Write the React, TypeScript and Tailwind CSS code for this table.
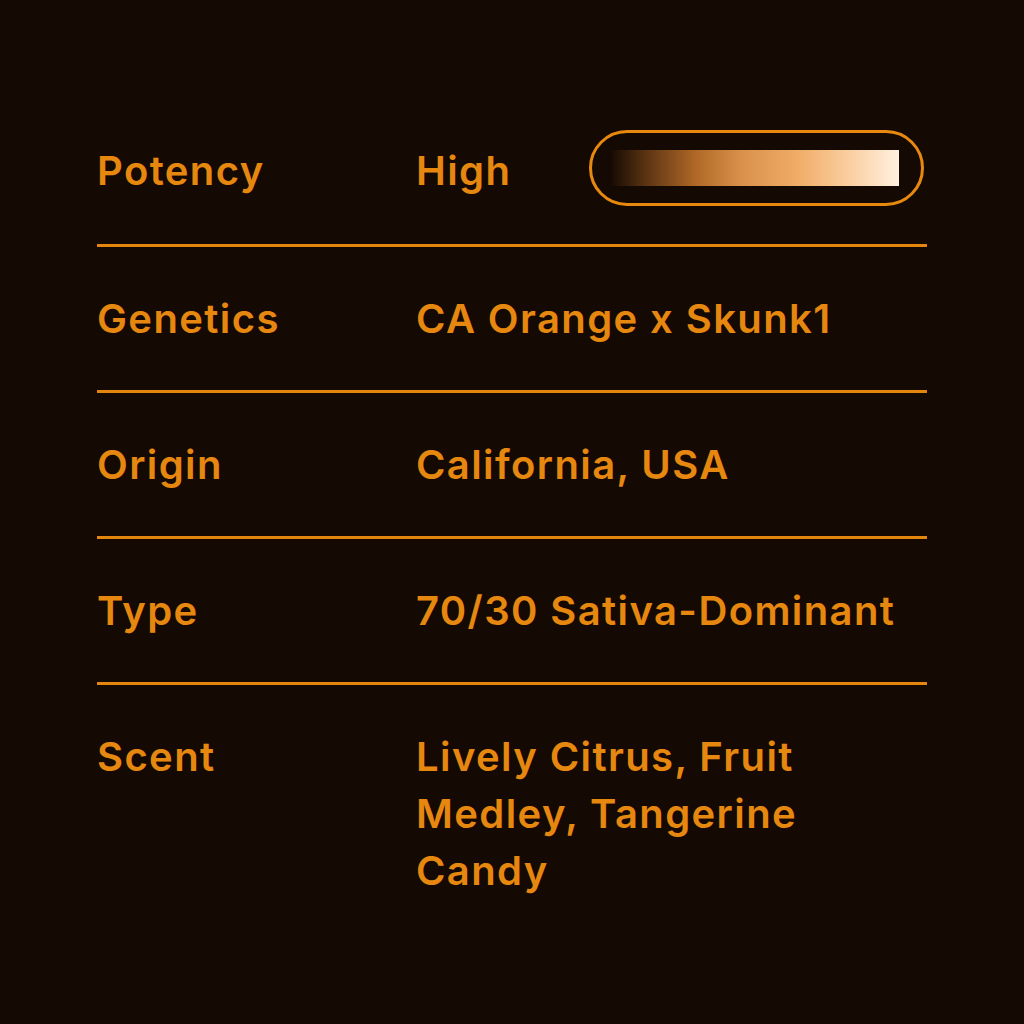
import React from "react";

const rows = [
  { label: "Genetics", value: "CA Orange x Skunk1" },
  { label: "Origin", value: "California, USA" },
  { label: "Type", value: "70/30 Sativa-Dominant" },
];

export default function App() {
  return (
    <div
      className="w-[1024px] h-[1024px] bg-[#150a03] text-[#e6870f] px-[97px] pt-[100px] tracking-[1.4px]"
      style={{ fontFamily: "Inter, 'Noto Sans', sans-serif" }}
    >
      <div className="flex items-center pt-[42px] pb-[45px] border-b-[3px] border-[#e4850e] text-[40px] leading-[57px] font-semibold">
        <div className="w-[319px]">Potency</div>
        <div className="flex-1 flex items-center justify-between">
          <span>High</span>
          <div className="w-[335px] h-[76px] -mt-[13px] -mb-[7px] mr-[3px] rounded-full border-[3px] border-[#e8890f] flex items-center pl-[19px] pr-[22px]">
            <div className="h-[36px] w-full bg-[linear-gradient(to_right,#170b04_0%,#5a3312_12%,#b26a28_30%,#d9904a_45%,#f0ad68_65%,#fbd3a8_85%,#fff0e0_100%)]" />
          </div>
        </div>
      </div>
      {rows.map((r) => (
        <div
          key={r.label}
          className="flex items-center pt-[43px] pb-[43px] border-b-[3px] border-[#e4850e] text-[40px] leading-[57px] font-semibold"
        >
          <div className="w-[319px]">{r.label}</div>
          <div className="flex-1">{r.value}</div>
        </div>
      ))}
      <div className="flex items-start pt-[43px] text-[40px] leading-[57px] font-semibold">
        <div className="w-[319px]">Scent</div>
        <div className="flex-1 max-w-[400px]">Lively Citrus, Fruit Medley, Tangerine Candy</div>
      </div>
    </div>
  );
}
